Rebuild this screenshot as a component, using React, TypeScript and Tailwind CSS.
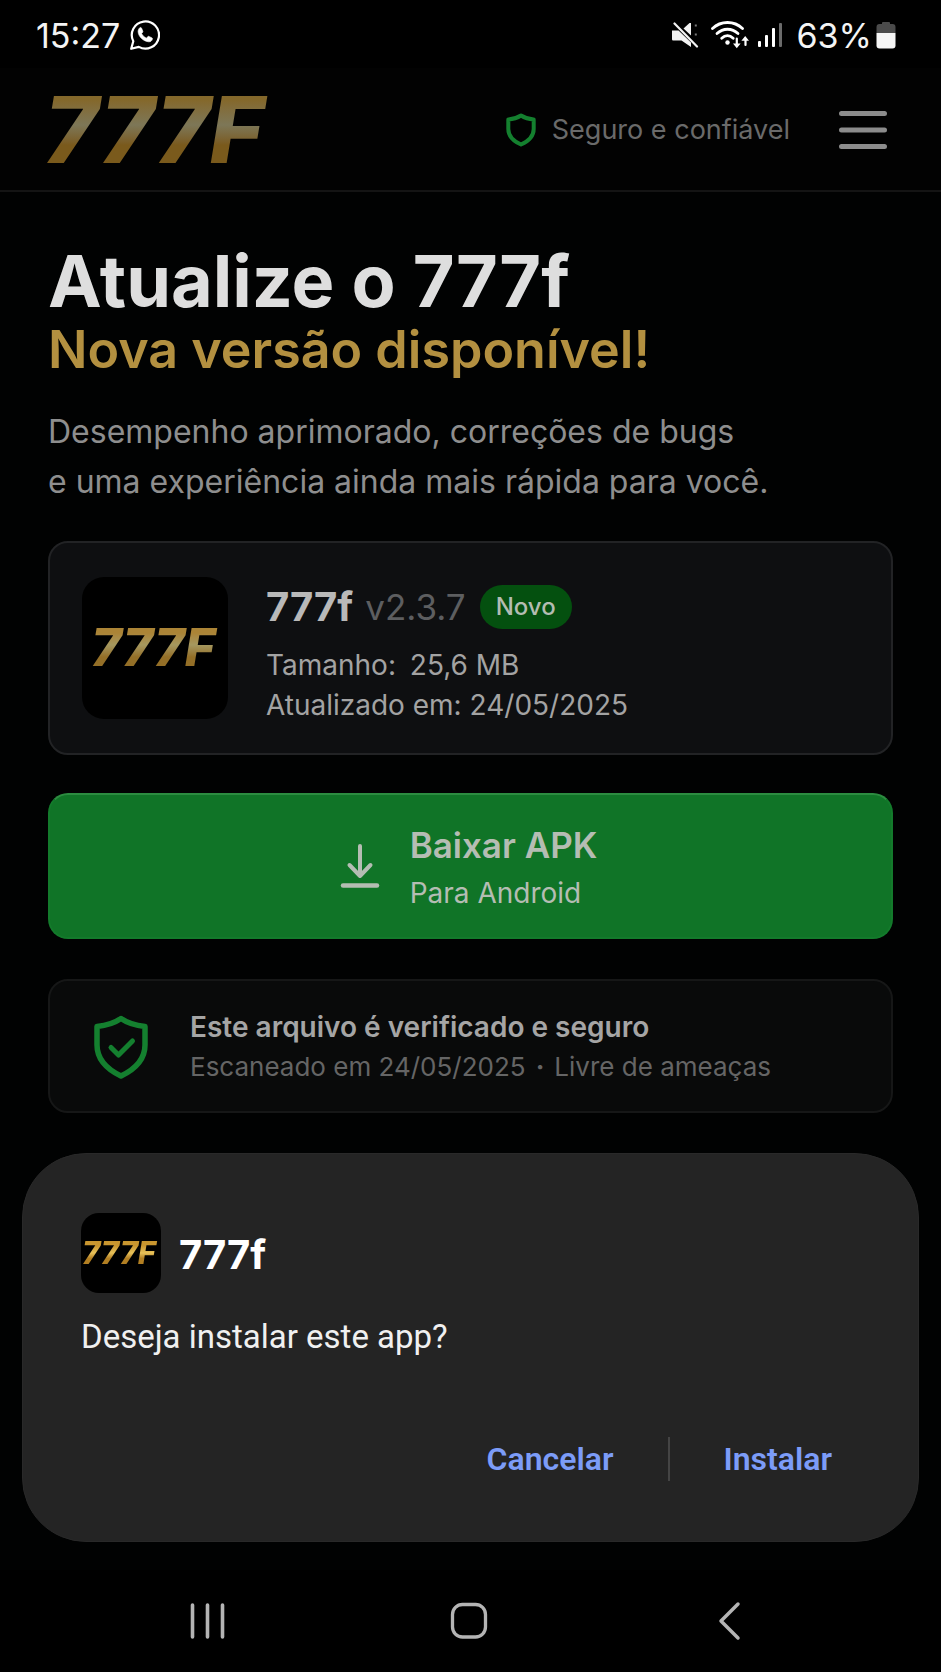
import { clsx } from "clsx";
import type { ReactNode } from "react";

const STATUS_TIME = "15:27";
const BATTERY_LEVEL = "63%";

const RELEASE = {
  name: "777f",
  version: "v2.3.7",
  size: "25,6 MB",
  updatedAt: "24/05/2025",
};

const WhatsAppIcon = () => (
  <svg viewBox="0 0 30 30" className="size-[30px]" fill="none" aria-hidden="true">
    <path
      d="M1.2 28.8 3.3 21.2A13.6 13.6 0 1 1 8.8 26.9Z"
      stroke="#fff"
      strokeWidth="2.2"
      strokeLinejoin="round"
    />
    <path
      d="M9.6 7.9c.7-.7 1.6-.5 1.9.2l1.3 3c.2.5.1.9-.2 1.3l-1 1.2c1 2 2.7 3.600 4.800 4.600l1.300-1.500c.3-.4.7-.5 1.200-.3l2.900 1.400c.6.3.7.6.6 1.200-.4 2-2 2.900-3.700 2.800-5.600-.5-10.500-5.400-10.600-10.300 0-1.500.7-2.800 1.500-3.600Z"
      fill="#fff"
      stroke="#fff"
      strokeWidth=".6"
    />
  </svg>
);

const MutedIcon = () => (
  <svg viewBox="0 0 28 26" className="h-[26px] w-7" fill="#f2f2f2" aria-hidden="true">
    <path d="M1 8.5h6.5L20 20.5V25L10.5 18.500H2.500C1.500 18.500 1 18 1 17Z" />
    <path d="m12.500 6.500 6-5.500H20v12.500Z" />
    <path d="m3.500 1.500 22.500 23" stroke="#f2f2f2" strokeWidth="2.2" strokeLinecap="round" />
    <path d="M24.800 2.500v2M24.800 11.500v2" stroke="#777" strokeWidth="2" />
  </svg>
);

const WifiIcon = () => (
  <svg viewBox="0 0 38 28" className="h-7 w-[38px]" fill="none" stroke="#fff" strokeLinecap="round" aria-hidden="true">
    <path d="M1.5 7.5c8.5-8 21.5-8 30 0" strokeWidth="2.8" />
    <path d="M6 12.600c6-5.800 15-5.800 21 0" strokeWidth="2.8" />
    <path d="M10.700 17.200c3.500-3.400 8-3.400 11.500 0" strokeWidth="2.8" />
    <circle cx="16.5" cy="21.5" r="2.2" fill="#fff" stroke="none" />
    <path d="M25.800 17.500v6M34.500 24v-6" strokeWidth="2.2" />
    <path d="M22 22.500h7.600l-3.800 4.800ZM30.400 19.800h7.600l-3.800-4.800Z" fill="#fff" stroke="none" />
  </svg>
);

const SignalIcon = () => (
  <svg viewBox="0 0 26 26" className="size-[26px]" aria-hidden="true">
    <rect x="1" y="19" width="3" height="6" rx="1" fill="#fff" />
    <rect x="8" y="13" width="3" height="12" rx="1" fill="#fff" />
    <rect x="15" y="6" width="3" height="19" rx="1" fill="#fff" />
    <rect x="22" y="1" width="3" height="24" rx="1" fill="#6b6b6b" />
  </svg>
);

const BatteryIcon = () => (
  <svg viewBox="0 0 20 28" className="h-7 w-5" aria-hidden="true">
    <path d="M6 3V2q0-1 1-1h6q1 0 1 1v1h2.5Q19.5 3 19.5 6v6H.5V6q0-3 3-3Z" fill="#4b4b4b" />
    <path d="M.5 12h19v12.5q0 3-3 3h-13q-3 0-3-3Z" fill="#f5f5f5" />
  </svg>
);

const ShieldIcon = () => (
  <svg viewBox="0 0 30 34" className="h-[34px] w-[30px]" fill="none" aria-hidden="true">
    <path
      d="M15 2.500c3.600 2.300 7.800 3.600 12.700 4V16c0 7.200-4.800 12-12.700 15.500C7.100 28 2.300 23.200 2.300 16V6.500c4.900-.4 9.100-1.700 12.700-4Z"
      stroke="#14802f"
      strokeWidth="4"
      strokeLinejoin="round"
    />
  </svg>
);

const ShieldCheckIcon = () => (
  <svg viewBox="0 0 54 64" className="h-16 w-[54px]" fill="none" stroke="#14802f" strokeLinecap="round" strokeLinejoin="round" aria-hidden="true">
    <path
      d="M27 3.500C33.500 8 41.500 10.500 51 11.500V30c0 14.500-9.500 24-24 31C12.500 54 3 44.500 3 30V11.500C12.500 10.500 20.500 8 27 3.500Z"
      strokeWidth="5.5"
    />
    <path d="m17 32.500 7.500 7.500L38.500 26" strokeWidth="5" />
  </svg>
);

const DownloadIcon = () => (
  <svg viewBox="0 0 40 46" className="h-[46px] w-10" fill="none" stroke="#b5bdb3" strokeWidth="4" strokeLinecap="round" strokeLinejoin="round" aria-hidden="true">
    <path d="M20 3v30M9.500 22 20 33l10.500-11" />
    <path d="M3 42.500h34" strokeWidth="4.5" />
  </svg>
);

const MenuIcon = () => (
  <svg viewBox="0 0 50 40" className="h-10 w-[50px]" stroke="#8c8c8c" strokeWidth="5" strokeLinecap="round" aria-hidden="true">
    <path d="M3.500 3.500h43M3.500 20h43M3.500 36.500h43" />
  </svg>
);

const Logo = ({ className }: { className: string }) => (
  <span
    className={clsx(
      "block bg-clip-text font-['Inter','Liberation_Sans',sans-serif] font-extrabold text-transparent italic",
      className,
    )}
  >
    777F
  </span>
);

const StatusBar = () => (
  <div className="flex h-[68px] items-center justify-between bg-black pt-[2px] pr-[45px] pl-9 text-[34px] text-[#f4f4f4]">
    <div className="flex items-center gap-[10px]">
      <span>{STATUS_TIME}</span>
      <WhatsAppIcon />
    </div>
    <div className="flex items-center">
      <MutedIcon />
      <span className="ml-3">
        <WifiIcon />
      </span>
      <span className="ml-2">
        <SignalIcon />
      </span>
      <span className="ml-[14px]">{BATTERY_LEVEL}</span>
      <span className="ml-1">
        <BatteryIcon />
      </span>
    </div>
  </div>
);

const Header = () => (
  <header className="flex h-[124px] items-center justify-between border-b-2 border-[#141414] bg-[#020202] pt-[2px] pr-[53px] pl-11">
    <a href="#inicio" aria-label="777F">
      <Logo className="bg-linear-to-b from-[#84682b] from-20% via-[#7d7757] via-45% to-[#7a5a1c] to-65% pr-4 text-[92px] leading-[100px]" />
    </a>
    <div className="flex items-center">
      <ShieldIcon />
      <span className="ml-4 text-[27px] text-[#6a6a6a]">Seguro e confiável</span>
      <button type="button" aria-label="Abrir menu" className="ml-12">
        <MenuIcon />
      </button>
    </div>
  </header>
);

const Panel = ({ className, children }: { className: string; children: ReactNode }) => (
  <section className={clsx("flex rounded-[20px] border-2", className)}>{children}</section>
);

const ReleaseCard = () => (
  <Panel className="mt-[34px] items-start border-[#222325] bg-[#0e0f11] px-8 pt-[34px] pb-7">
    <div className="flex h-[142px] w-[146px] shrink-0 items-center justify-center rounded-[22px] bg-black">
      <Logo className="bg-linear-to-b from-[#ab8436] from-25% via-[#a5985f] via-45% to-[#946f27] to-65% pr-1 text-[52px] leading-[60px]" />
    </div>
    <div className="ml-[38px] pt-[6px] text-[28px] leading-10 text-[#a3a3a3]">
      <div className="mb-[14px] flex h-12 items-center">
        <h3 className="text-[40px] font-bold text-[#b9b9b9]">{RELEASE.name}</h3>
        <span className="ml-3 text-[35px] text-[#5d5e60]">{RELEASE.version}</span>
        <span className="ml-[14px] rounded-full bg-[#04500f] px-4 py-[2px] text-2xl leading-10 font-medium text-[#b4bdb2]">
          Novo
        </span>
      </div>
      <p>
        Tamanho: <span className="ml-[6px]">{RELEASE.size}</span>
      </p>
      <p>Atualizado em: {RELEASE.updatedAt}</p>
    </div>
  </Panel>
);

const DownloadButton = () => (
  <button
    type="button"
    className="mt-[38px] flex w-full items-center justify-center gap-[30px] rounded-[20px] border-2 border-[#137a2b] border-t-[#2c8c40] bg-[#107427] py-[26px] pr-1 text-left text-[#b5bdb3]"
  >
    <DownloadIcon />
    <span className="flex flex-col gap-[6px]">
      <span className="text-[35px] leading-12 font-semibold">Baixar APK</span>
      <span className="text-[28px] leading-9">Para Android</span>
    </span>
  </button>
);

const VerifiedCard = () => (
  <Panel className="mt-10 items-center border-[#161717] bg-[#090a0a] pt-[26px] pb-6 pl-11">
    <ShieldCheckIcon />
    <div className="ml-[42px] leading-10">
      <h3 className="text-[28px] font-semibold text-[#a5a5a5]">Este arquivo é verificado e seguro</h3>
      <p className="text-[26px] text-[#656565]">
        Escaneado em {RELEASE.updatedAt}
        <span className="mx-[10px] font-bold">·</span>
        Livre de ameaças
      </p>
    </div>
  </Panel>
);

const InstallDialog = () => (
  <div
    role="dialog"
    aria-labelledby="install-title"
    className="mx-[22px] mt-10 rounded-[64px] border border-[#292929] bg-[#242424] px-[58px] pt-[59px] pb-[58px] font-['Roboto','Noto_Sans',sans-serif]"
  >
    <div className="flex items-center gap-[18px]">
      <div className="flex size-20 shrink-0 items-center justify-center rounded-[18px] bg-black">
        <Logo className="bg-linear-to-b from-[#c9962f] from-30% via-[#e8c25a] via-50% to-[#b27f22] to-65% pr-1 text-[31px] leading-9" />
      </div>
      <h2 id="install-title" className="pt-1 font-['Inter',sans-serif] text-[40px] leading-12 font-bold text-white">
        {RELEASE.name}
      </h2>
    </div>
    <p className="mt-6 text-[33px] leading-10 text-[#f0f0f0]">Deseja instalar este app?</p>
    <div className="mt-[78px] flex items-center justify-end pr-7 text-[32px] leading-12 font-semibold text-[#7c9cf8]">
      <button type="button">Cancelar</button>
      <span className="mx-[54px] h-11 w-[2px] bg-[#444]" />
      <button type="button">Instalar</button>
    </div>
  </div>
);

const NavigationBar = () => (
  <nav className="flex h-[102px] items-center justify-between bg-black pr-48 pl-[188px]">
    <button type="button" aria-label="Recentes">
      <svg viewBox="0 0 40 40" className="size-10" stroke="#b4b4b4" strokeWidth="3.6" strokeLinecap="round">
        <path d="M4.500 4v32M19.500 4v32M34.500 4v32" />
      </svg>
    </button>
    <button type="button" aria-label="Início">
      <svg viewBox="0 0 40 40" className="size-10" fill="none" stroke="#b4b4b4" strokeWidth="3.3">
        <rect x="3.5" y="3.5" width="33" height="32.5" rx="10" />
      </svg>
    </button>
    <button type="button" aria-label="Voltar">
      <svg viewBox="0 0 40 40" className="size-10" fill="none" stroke="#b4b4b4" strokeWidth="3.5" strokeLinecap="round" strokeLinejoin="round">
        <path d="M29 3 12 20l17 17" />
      </svg>
    </button>
  </nav>
);

const App = () => (
  <div className="flex min-h-screen flex-col bg-[#010202] font-['Inter','Liberation_Sans',sans-serif]">
    <StatusBar />
    <Header />
    <main className="px-12 pt-[53px]">
      <h1 className="text-7xl leading-[72px] font-bold text-[#dedede]">Atualize o 777f</h1>
      <h2 className="text-[52px] leading-[66px] font-semibold text-[#b39040]">Nova versão disponível!</h2>
      <p className="mt-6 text-[32px] leading-[50px] text-[#8e8e8e]">
        Desempenho aprimorado, correções de bugs
        <br />e uma experiência ainda mais rápida para você.
      </p>
      <ReleaseCard />
      <DownloadButton />
      <VerifiedCard />
    </main>
    <InstallDialog />
    <div className="mt-auto">
      <NavigationBar />
    </div>
  </div>
);

export default App;
